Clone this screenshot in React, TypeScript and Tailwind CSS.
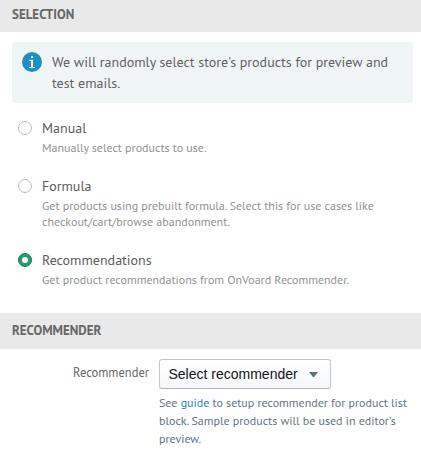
import React from "react";

function SectionHeader({ title, className }: { title: string; className: string }) {
  return (
    <h2 className={`flex items-center bg-[#e9e9e9] px-3 text-[13px] font-bold text-[#666] ${className}`}>
      <span className="whitespace-nowrap">{title}</span>
    </h2>
  );
}

function Option({ label, lines, checked = false }: { label: string; lines: string[]; checked?: boolean }) {
  return (
    <label className="flex">
      <span
        className={`mt-[3px] mr-[10px] flex size-[14px] shrink-0 items-center justify-center rounded-full border ${
          checked ? "border-[#17805c] bg-[#239b74]" : "border-[#bdbdbd] bg-white"
        }`}
      >
        {checked && <span className="size-[6px] rounded-full bg-white" />}
      </span>
      <span className="block whitespace-nowrap">
        <span className="block text-[14px] leading-5 text-[#5c5c5c]">{label}</span>
        <span className="mt-[2px] block text-[12px] leading-4 text-[#929292]">
          {lines.map((l) => (
            <span key={l} className="block">
              {l}
            </span>
          ))}
        </span>
      </span>
    </label>
  );
}

export default function App() {
  return (
    <main className="h-[463px] w-[421px] overflow-hidden bg-white font-['PT_Sans','Noto_Sans',sans-serif]">
      <SectionHeader title="SELECTION" className="h-8 pb-[3px]" />
      <div className="mt-[10px] mr-2 ml-3 flex h-[61px] rounded-[3px] bg-[#eff5f5] pt-[10px] pl-[10px]">
        <svg className="mr-[10px] size-5 shrink-0" viewBox="0 0 20 20">
          <circle cx="10" cy="10" r="10" fill="#2090c3" />
          <path d="M9 4h2v2H9zM7.5 7.8H11V15h2v1H7v-1h2.1V8.9H7.5z" fill="#fff" />
        </svg>
        <p className="text-[14px] leading-[21px] whitespace-nowrap text-[#626262]">
          <span className="block">We will randomly select store's products for preview and</span>
          <span className="block">test emails.</span>
        </p>
      </div>
      <div className="flex flex-col pt-[15px] pl-[18px]">
        <div className="h-[58px]">
          <Option label="Manual" lines={["Manually select products to use."]} />
        </div>
        <div className="h-[74px]">
          <Option
            label="Formula"
            lines={["Get products using prebuilt formula. Select this for use cases like", "checkout/cart/browse abandonment."]}
          />
        </div>
        <div className="h-[63px]">
          <Option label="Recommendations" lines={["Get product recommendations from OnVoard Recommender."]} checked />
        </div>
      </div>
      <SectionHeader title="RECOMMENDER" className="h-9" />
      <div className="flex pt-[10px]">
        <div className="w-[149px] pt-[4px] text-right text-[12.5px] leading-[18px] whitespace-nowrap text-[#666]">Recommender</div>
        <div className="ml-[10px] whitespace-nowrap">
          <button className="flex h-[30px] w-[172px] items-center rounded-[3px] border border-[#c4c6c9] border-b-[#b0b4b8] bg-linear-to-b from-white to-[#f5f7fa] pl-[8.5px] font-['Liberation_Sans',Arial,sans-serif] text-[14px] text-[#10151c]">
            <span className="w-[130px] text-left">Select recommender</span>
            <svg className="ml-[10.5px] h-[5px] w-[9px]" viewBox="0 0 9 5">
              <path d="M0 0h9L5 5H4z" fill="#5d6f80" />
            </svg>
          </button>
          <p className="mt-[5px] text-[12px] leading-[18px] text-[#637381]">
            <span className="block">
              See <a className="text-[#2584bb]">guide</a> to setup recommender for product list
            </span>
            <span className="block">block. Sample products will be used in editor's</span>
            <span className="block">preview.</span>
          </p>
        </div>
      </div>
    </main>
  );
}
